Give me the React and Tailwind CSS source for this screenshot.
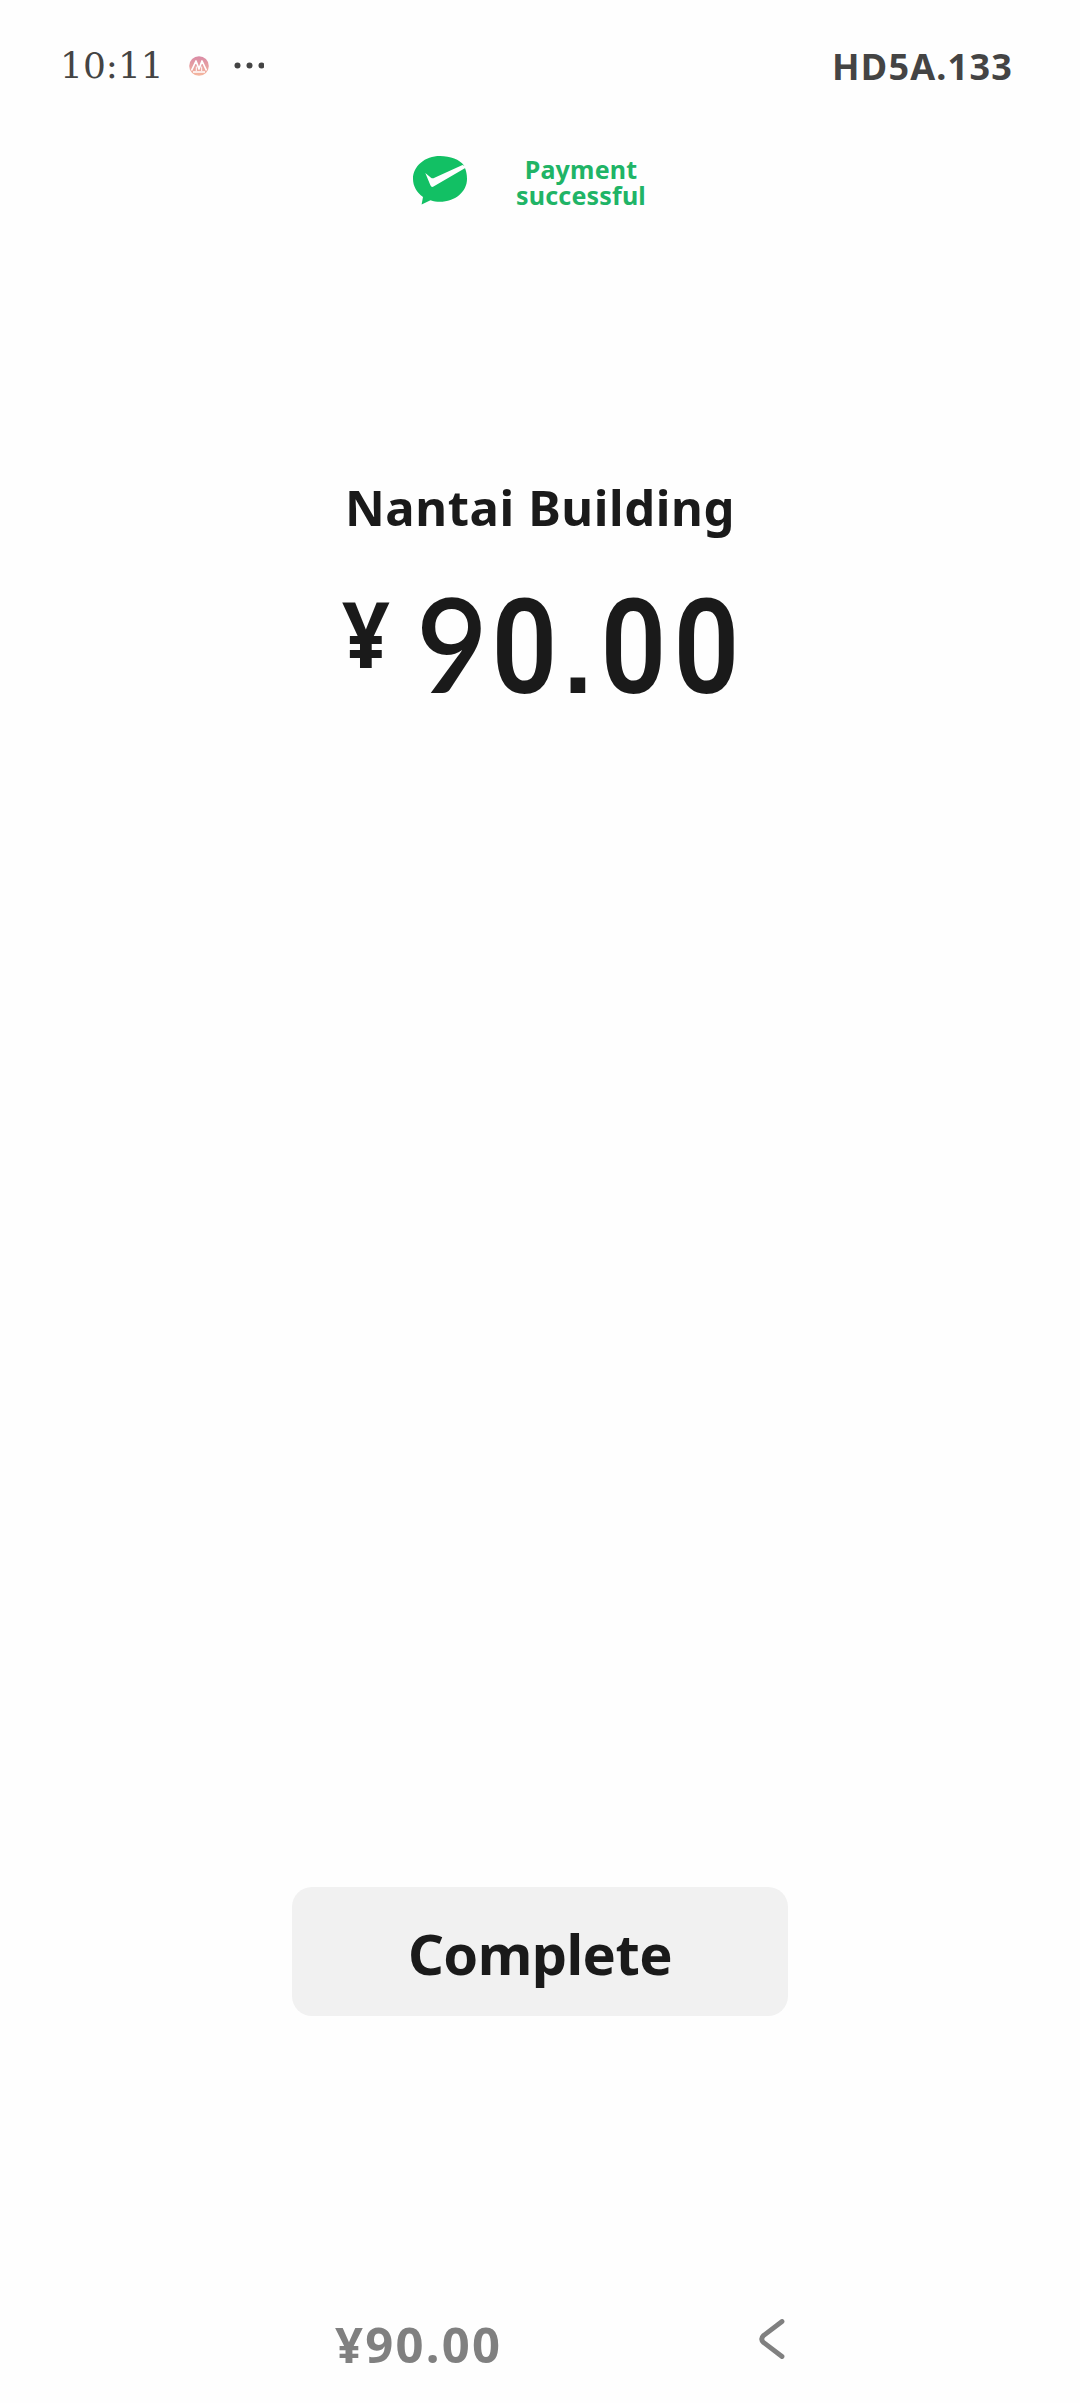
import React from "react";

const BankLogo = () => (
  <svg className="w-6 h-6" viewBox="0 0 24 24" fill="none">
    <defs>
      <linearGradient id="bank" x1="0" y1="0" x2="0" y2="1">
        <stop offset="0" stopColor="#d98aa6" />
        <stop offset="1" stopColor="#f5b79e" />
      </linearGradient>
    </defs>
    <circle cx="12" cy="12" r="9.8" fill="url(#bank)" />
    <path
      d="M4.500 16.500L9 7L12 15L15 7L19.500 16.500M6 18H18"
      stroke="#fff"
      strokeWidth="1.7"
      strokeLinejoin="round"
    />
    <path d="M9.300 12.500V17M14.700 12.500V17" stroke="#fff" strokeWidth="1" />
  </svg>
);

const PayIcon = () => (
  <svg className="w-[54px] h-[49px]" viewBox="0 0 54 49">
    <path
      d="M51 9.500C46.500 3.500 37.500 0 27 0C12 0 0 10 0 23C0 30 3.800 36.600 10 41L8.600 48.500L17.500 44.200C20.500 45.300 23.700 45.800 27 45.800C42 45.800 54 35.800 54 23C54 19 53.500 15.500 51 9.500Z"
      fill="#12c064"
    />
    <path
      d="M12.300 17L18 21.700Q19.500 22.700 21.500 21.700L49.500 9L54 11L20.500 30.500Q18.500 31.800 17.300 29Z"
      fill="#fefefe"
    />
  </svg>
);

const Zero = () => (
  <span className="inline-block w-[73px] text-center scale-x-[0.88] font-['Roboto',sans-serif] font-semibold">
    0
  </span>
);

const App = () => {
  return (
    <div className="w-[1080px] h-[2403px] bg-[#fefefe] flex flex-col items-center overflow-hidden font-['Noto_Sans',sans-serif] text-[#1a1a1a]">
      {/* Status bar */}
      <header className="w-full h-[132px] shrink-0 flex items-center justify-between pl-[60px] pr-[67px] text-[#444444]">
        <div className="flex items-center">
          <span className="w-[127px] shrink-0 font-['DejaVu_Serif',serif] text-[36px] whitespace-nowrap">
            10:11
          </span>
          <BankLogo />
          <svg className="ml-[23px] w-[30px] h-2" viewBox="0 0 30 8" fill="#444444">
            <circle cx="3.500" cy="3.500" r="3" />
            <circle cx="15.500" cy="3.500" r="3" />
            <circle cx="27.500" cy="3.500" r="3" />
          </svg>
        </div>
        <span className="pt-[2px] text-[36px] tracking-[1.2px] font-bold">HD5A.133</span>
      </header>

      {/* Payment result */}
      <div className="w-full h-[76px] shrink-0 pt-6 pl-[413px] flex items-start">
        <PayIcon />
        <p className="ml-[44px] w-[140px] text-[25px] leading-[26px] tracking-[0.2px] font-bold text-center text-[#20b466]">
          Payment
          <br />
          successful
        </p>
      </div>

      {/* Merchant and amount */}
      <h1 className="mt-[267px] h-16 shrink-0 text-[49px] leading-[64px] tracking-[0.6px] font-bold whitespace-nowrap">
        Nantai Building
      </h1>
      <div className="mt-[38px] w-full h-[131px] shrink-0 pl-[340px] flex items-baseline whitespace-nowrap">
        <span className="w-[51px] -translate-y-[25px] scale-x-[0.92] text-[91px] leading-[91px] font-bold">
          ¥
        </span>
        <p className="ml-[23px] text-[131px] leading-[131px]">
          <span className="inline-block w-[73px] text-center scale-x-[0.94] font-['Lato',sans-serif] font-semibold">
            9
          </span>
          <Zero />
          <span className="inline-block w-[36px] text-center font-['Liberation_Sans',sans-serif] text-[104px] font-bold">
            .
          </span>
          <Zero />
          <Zero />
        </p>
      </div>

      <button className="mt-[1179px] w-[496px] h-[129px] shrink-0 rounded-[20px] bg-[#f1f1f1] text-[56px] leading-[129px] tracking-[-0.6px] font-bold">
        <span className="block translate-y-[2px]">Complete</span>
      </button>

      {/* Bottom bar */}
      <footer className="mt-[296px] w-full h-[64px] shrink-0 pl-[335px] flex items-start text-[#808080]">
        <span className="w-[424px] text-[49px] leading-[64px] tracking-[2.2px] font-bold">¥90.00</span>
        <svg className="mt-[7px] w-[26px] h-[40px]" viewBox="0 0 26 40" fill="none">
          <path
            d="M23 2.500L4.500 16.500Q1 20 4.500 23.500L23 37.500"
            stroke="currentColor"
            strokeWidth="4.800"
            strokeLinecap="round"
          />
        </svg>
      </footer>
    </div>
  );
};

export default App;
